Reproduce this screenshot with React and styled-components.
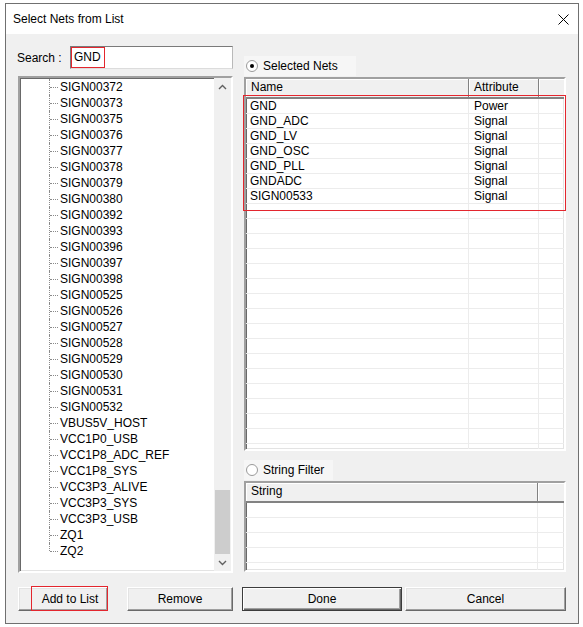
import React from 'react';
import styled, { createGlobalStyle } from 'styled-components';

const GlobalStyle = createGlobalStyle`
  html, body {
    margin: 0;
    padding: 0;
    background: #fff;
  }
  body {
    font-family: "Liberation Sans", Arial, sans-serif;
    font-size: 12px;
    color: #000;
  }
`;

const Window = styled.div`
  margin: 3px 0 0 5px;
  width: 574px;
  height: 621px;
  box-sizing: border-box;
  border: 1px solid #707070;
  display: flex;
  flex-direction: column;
  background: #f0f0f0;
`;

const TitleBar = styled.div`
  height: 30px;
  flex-shrink: 0;
  background: #fff;
  display: flex;
  align-items: center;
  justify-content: space-between;
  padding: 0 9px 0 7px;
`;

const Title = styled.span`
  font-size: 12px;
`;

const Body = styled.div`
  flex: 1;
  padding: 12px 11px 0 12px;
  display: flex;
  flex-direction: column;
`;

const Main = styled.div`
  display: grid;
  grid-template-columns: 215px 322px;
  column-gap: 11px;
`;

const LeftCol = styled.div`
  display: flex;
  flex-direction: column;
  gap: 7px;
`;

const SearchRow = styled.div`
  display: flex;
  align-items: center;
  height: 23px;
`;

const SearchLabel = styled.span`
  width: 53px;
  margin-left: -1px;
  flex-shrink: 0;
`;

const SearchInput = styled.div`
  flex: 1;
  height: 23px;
  box-sizing: border-box;
  background: #fff;
  border: 1px solid;
  border-color: #7a7a7a #b9b9b9 #dcdcdc #7a7a7a;
  display: flex;
`;

const Marked = styled.span`
  box-sizing: border-box;
  border: 1px solid #e3262e;
  padding: 0 3px 0 2px;
  line-height: 19px;
`;

const Sunken = styled.div`
  box-sizing: border-box;
  background: #fff;
  border: 2px solid;
  border-color: #a0a0a0 #fff #fff #a0a0a0;
  box-shadow: inset 1px 1px #696969, inset -1px -1px #e3e3e3;
`;

const ListBox = styled(Sunken)`
  height: 497px;
  display: flex;
  overflow: hidden;
`;

const Tree = styled.div`
  flex: 1;
  padding-top: 1px;
  overflow: hidden;
`;

const TreeItem = styled.div`
  position: relative;
  height: 16px;
  line-height: 16px;
  padding-left: 40px;
  white-space: nowrap;

  &::before {
    content: '';
    position: absolute;
    left: 29px;
    top: 0;
    height: ${p => (p.$last ? '8px' : '16px')};
    border-left: 1px dotted #8a8a8a;
  }
  &::after {
    content: '';
    position: absolute;
    left: 30px;
    top: 8px;
    width: 8px;
    border-top: 1px dotted #8a8a8a;
  }
`;

const ScrollBar = styled.div`
  width: 17px;
  background: #f0f0f0;
  display: flex;
  flex-direction: column;
`;

const ScrollArrow = styled.div`
  height: 17px;
  flex-shrink: 0;
  display: flex;
  align-items: center;
  justify-content: center;
`;

const ScrollTrack = styled.div`
  flex: 1;
  display: flex;
  flex-direction: column;
  justify-content: flex-end;
`;

const Thumb = styled.div`
  height: 64px;
  margin: 0 1px 0;
  background: #cdcdcd;
`;

const RightCol = styled.div`
  display: flex;
  flex-direction: column;
  padding-top: 10px;
`;

const RadioRow = styled.div`
  align-self: flex-start;
  height: 20px;
  display: flex;
  align-items: center;
  gap: 5px;
  padding: 0 ${p => p.$padRight}px 0 2px;
  background: #f6f6f6;
  margin-top: ${p => p.$top}px;
`;

const RadioCircle = styled.span`
  width: 12px;
  height: 12px;
  box-sizing: border-box;
  border-radius: 50%;
  border: 1px solid #9a9a9a;
  background: #fff;
  display: flex;
  align-items: center;
  justify-content: center;

  &::after {
    content: '';
    width: 4px;
    height: 4px;
    border-radius: 50%;
    background: ${p => (p.$checked ? '#000' : 'transparent')};
  }
`;

const TableFrame = styled.div`
  position: relative;
  margin-top: 1px;
`;

const Table = styled(Sunken)`
  height: ${p => p.$height}px;
  overflow: hidden;
`;

const HeaderRow = styled.div`
  display: grid;
  grid-template-columns: ${p => p.$cols};
  height: 20px;
  box-sizing: border-box;
  border-bottom: 2px solid #828282;
  background: #f0f0f0;
`;

const HeaderCell = styled.div`
  padding-left: ${p => p.$pad}px;
  line-height: 17px;
  border-right: 1px solid #828282;
  box-shadow: inset 1px 1px #fff;
  white-space: nowrap;

  &:last-child {
    border-right: none;
  }
`;

const Row = styled.div`
  display: grid;
  grid-template-columns: ${p => p.$cols};
  height: 15px;
  box-sizing: border-box;
  border-bottom: 1px solid #ececec;
`;

const Cell = styled.div`
  padding-left: ${p => p.$pad}px;
  line-height: 15px;
  border-right: 1px solid #ececec;
  white-space: nowrap;

  &:last-child {
    border-right: none;
  }
`;

const Highlight = styled.div`
  position: absolute;
  left: -1px;
  right: 0;
  top: 18px;
  height: 116px;
  box-sizing: border-box;
  border: 1px solid #e3262e;
  pointer-events: none;
`;

const ButtonRow = styled.div`
  display: flex;
  margin-top: 14px;
`;

const Button = styled.button`
  position: relative;
  width: ${p => p.$width}px;
  margin-left: ${p => p.$gap || 0}px;
  height: 24px;
  padding: 0;
  font-family: "Liberation Sans", Arial, sans-serif;
  font-size: 12px;
  color: #000;
  background: #f0f0f0;
  border: 1px solid;
  border-color: ${p => (p.$default ? '#3c3c3c' : '#fff #696969 #696969 #fff')};
  box-shadow: ${p =>
    p.$default
      ? 'inset 1px 1px #fff, inset -1px -1px #696969, inset -2px -2px #a0a0a0'
      : 'inset -1px -1px #a0a0a0, inset 1px 1px #e3e3e3'};
`;

const ButtonLabel = styled.span`
  padding-left: ${p => p.$shift || 0}px;
`;

const ButtonMark = styled.span`
  position: absolute;
  left: 12px;
  top: -2px;
  width: 77px;
  height: 25px;
  box-sizing: border-box;
  border: 1px solid #e3262e;
`;

const nets = [
  'SIGN00372', 'SIGN00373', 'SIGN00375', 'SIGN00376', 'SIGN00377',
  'SIGN00378', 'SIGN00379', 'SIGN00380', 'SIGN00392', 'SIGN00393',
  'SIGN00396', 'SIGN00397', 'SIGN00398', 'SIGN00525', 'SIGN00526',
  'SIGN00527', 'SIGN00528', 'SIGN00529', 'SIGN00530', 'SIGN00531',
  'SIGN00532', 'VBUS5V_HOST', 'VCC1P0_USB', 'VCC1P8_ADC_REF', 'VCC1P8_SYS',
  'VCC3P3_ALIVE', 'VCC3P3_SYS', 'VCC3P3_USB', 'ZQ1', 'ZQ2',
];

const selected = [
  ['GND', 'Power'],
  ['GND_ADC', 'Signal'],
  ['GND_LV', 'Signal'],
  ['GND_OSC', 'Signal'],
  ['GND_PLL', 'Signal'],
  ['GNDADC', 'Signal'],
  ['SIGN00533', 'Signal'],
];

const netCols = '223px 70px 1fr';
const strCols = '292px 1fr';

const Chevron = ({ up }) => (
  <svg width="9" height="6" viewBox="0 0 9 6">
    <polyline
      points={up ? '1,5 4.5,1.5 8,5' : '1,1 4.5,4.5 8,1'}
      fill="none"
      stroke="#606060"
      strokeWidth="1.4"
    />
  </svg>
);

const CloseIcon = () => (
  <svg width="11" height="11" viewBox="0 0 11 11">
    <path d="M0.5 0.5 L10.5 10.5 M10.5 0.5 L0.5 10.5" stroke="#000" strokeWidth="1" />
  </svg>
);

export default function App() {
  const netRows = Array.from({ length: 24 }, (_, i) => selected[i] || ['', '']);
  const strRows = Array.from({ length: 5 }, () => '');

  return (
    <>
      <GlobalStyle />
      <Window>
        <TitleBar>
          <Title>Select Nets from List</Title>
          <CloseIcon />
        </TitleBar>
        <Body>
          <Main>
            <LeftCol>
              <SearchRow>
                <SearchLabel>Search :</SearchLabel>
                <SearchInput>
                  <Marked>GND</Marked>
                </SearchInput>
              </SearchRow>
              <ListBox>
                <Tree>
                  {nets.map((n, i) => (
                    <TreeItem key={n} $last={i === nets.length - 1}>{n}</TreeItem>
                  ))}
                </Tree>
                <ScrollBar>
                  <ScrollArrow><Chevron up /></ScrollArrow>
                  <ScrollTrack><Thumb /></ScrollTrack>
                  <ScrollArrow><Chevron /></ScrollArrow>
                </ScrollBar>
              </ListBox>
            </LeftCol>
            <RightCol>
              <RadioRow $padRight={18} $top={0}>
                <RadioCircle $checked />
                <span>Selected Nets</span>
              </RadioRow>
              <TableFrame>
                <Table $height={374}>
                  <HeaderRow $cols={netCols}>
                    <HeaderCell $pad={5}>Name</HeaderCell>
                    <HeaderCell $pad={5}>Attribute</HeaderCell>
                    <HeaderCell />
                  </HeaderRow>
                  {netRows.map(([name, attr], i) => (
                    <Row key={i} $cols={netCols}>
                      <Cell $pad={4}>{name}</Cell>
                      <Cell $pad={5}>{attr}</Cell>
                      <Cell />
                    </Row>
                  ))}
                </Table>
                <Highlight />
              </TableFrame>
              <RadioRow $padRight={9} $top={9}>
                <RadioCircle />
                <span>String Filter</span>
              </RadioRow>
              <TableFrame>
                <Table $height={91}>
                  <HeaderRow $cols={strCols}>
                    <HeaderCell $pad={5}>String</HeaderCell>
                    <HeaderCell />
                  </HeaderRow>
                  {strRows.map((s, i) => (
                    <Row key={i} $cols={strCols}>
                      <Cell $pad={4}>{s}</Cell>
                      <Cell />
                    </Row>
                  ))}
                </Table>
              </TableFrame>
            </RightCol>
          </Main>
          <ButtonRow>
            <Button $width={90}>
              <ButtonMark />
              <ButtonLabel $shift={14}>Add to List</ButtonLabel>
            </Button>
            <Button $width={106} $gap={19}>Remove</Button>
            <Button $width={160} $gap={9} $default>Done</Button>
            <Button $width={161} $gap={3}>Cancel</Button>
          </ButtonRow>
        </Body>
      </Window>
    </>
  );
}
